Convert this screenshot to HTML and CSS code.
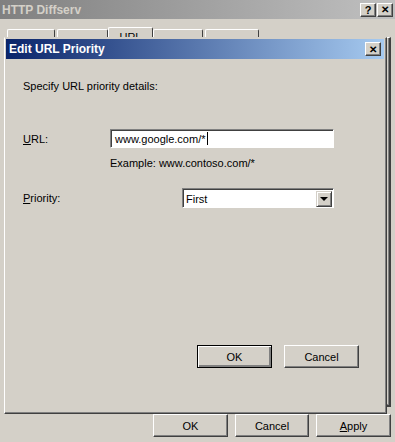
FILE: index.html
```html
<!DOCTYPE html>
<html lang="en">
<head>
    <meta charset="UTF-8">
    <title>HTTP Diffserv</title>
    <link rel="stylesheet" href="styles.css">
</head>
<body>
    <div class="window">
        <div class="titlebar inactive">
            <span class="title">HTTP Diffserv</span>
            <div class="caption-buttons">
                <span class="cap-btn">?</span>
                <span class="cap-btn x">&#x2715;</span>
            </div>
        </div>

        <div class="tabs">
            <span class="tab t1"></span>
            <span class="tab t2"></span>
            <span class="tab t3 selected">URL</span>
            <span class="tab t4"></span>
            <span class="tab t5"></span>
        </div>
        <div class="tab-pane"></div>

        <div class="footer">
            <button class="btn">OK</button>
            <button class="btn">Cancel</button>
            <button class="btn"><u>A</u>pply</button>
        </div>

        <!-- modal dialog sits over the property sheet -->
        <div class="dialog">
            <div class="titlebar active">
                <span class="title">Edit URL Priority</span>
                <span class="cap-btn x">&#x2715;</span>
            </div>
            <div class="dialog-body">
                <div class="intro">Specify URL priority details:</div>

                <div class="row url-row">
                    <label class="label"><u>U</u>RL:</label>
                    <div class="textbox">www.google.com/*<span class="caret"></span></div>
                </div>
                <div class="hint">Example: www.contoso.com/*</div>

                <div class="row prio-row">
                    <label class="label"><u>P</u>riority:</label>
                    <div class="combo">
                        <span class="combo-text">First</span>
                        <span class="combo-btn"><span class="arrow"></span></span>
                    </div>
                </div>

                <div class="dialog-buttons">
                    <button class="btn default">OK</button>
                    <button class="btn">Cancel</button>
                </div>
            </div>
        </div>
    </div>
</body>
</html>
```

FILE: styles.css
```css
body {
    margin: 0;
    background: #d4d0c8;
    font-family: "Liberation Sans", Arial, sans-serif;
    font-size: 11px;
    color: #000;
}
.window {
    position: relative;
    width: 395px;
    height: 442px;
    overflow: hidden;
    display: flex;
    flex-direction: column;
}

/* caption bars */
.titlebar {
    display: flex;
    align-items: center;
    justify-content: space-between;
    height: 19px;
    box-sizing: border-box;
    padding: 0 2px 0 2px;
}
.titlebar .title {
    font-weight: bold;
    font-size: 12px;
}
.titlebar.inactive {
    background: linear-gradient(to right, #808080, #c0c0c0);
    color: #d4d0c8;
    padding-right: 2px;
}
.titlebar.active {
    background: linear-gradient(to right, #0a246a, #a6caf0);
    color: #fff;
    height: 20px;
    padding: 0 3px 0 3px;
}
.caption-buttons {
    display: flex;
}
.cap-btn {
    display: flex;
    align-items: center;
    justify-content: center;
    width: 16px;
    height: 14px;
    box-sizing: border-box;
    background: #d4d0c8;
    color: #000;
    font-weight: bold;
    font-size: 11px;
    border-top: 1px solid #fff;
    border-left: 1px solid #fff;
    border-right: 1px solid #404040;
    border-bottom: 1px solid #404040;
    box-shadow: inset -1px -1px 0 #808080;
}
.cap-btn.x {
    font-size: 10px;
    margin-left: 1px;
}

/* property sheet behind */
.tabs {
    display: flex;
    align-items: flex-end;
    height: 18px;
    padding-left: 7px;
}
.tab {
    height: 8px;
    box-sizing: border-box;
    border-top: 1px solid #fff;
    border-left: 1px solid #fff;
    border-right: 1px solid #404040;
    border-radius: 2px 2px 0 0;
    font-size: 11px;
    text-align: center;
    line-height: 13px;
    padding-top: 3px;
    white-space: nowrap;
}
.t1 { width: 48px; margin-right: 2px; }
.t2 { width: 51px; }
.t3 { width: 45px; }
.t4 { width: 50px; margin-right: 2px; }
.t5 { width: 54px; }
.tab.selected {
    height: 10px;
    color: #000;
}
.tab-pane {
    height: 370px;
    margin: 0 4px 0 4px;
    box-sizing: border-box;
    border-top: 1px solid #fff;
    border-left: 1px solid #fff;
    border-right: 2px solid #404040;
    border-bottom: 2px solid #404040;
    box-shadow: inset -1px -1px 0 #808080;
}
.footer {
    display: flex;
    justify-content: flex-end;
    gap: 7px;
    padding: 7px 4px 0 0;
}

/* push buttons */
.btn {
    width: 75px;
    height: 23px;
    padding: 0;
    background: #d4d0c8;
    font-family: inherit;
    font-size: 11px;
    color: #000;
    border-top: 1px solid #fff;
    border-left: 1px solid #fff;
    border-right: 1px solid #404040;
    border-bottom: 1px solid #404040;
    box-shadow: inset -1px -1px 0 #808080;
}
.footer .btn:nth-child(2) { width: 74px; }
.btn.default {
    border: 1px solid #000;
    box-shadow: inset 1px 1px 0 #fff, inset -2px -2px 0 #808080;
}

/* dialog */
.dialog {
    position: absolute;
    left: 4px;
    top: 37px;
    width: 383px;
    height: 377px;
    box-sizing: border-box;
    background: #d4d0c8;
    border-top: 1px solid #d4d0c8;
    border-left: 1px solid #fff;
    border-right: 1px solid #404040;
    border-bottom: 1px solid #404040;
    box-shadow: inset -1px -1px 0 #808080;
    padding: 1px 2px 2px 1px;
    display: flex;
    flex-direction: column;
    z-index: 1;
}
.dialog-body {
    flex: 1;
    display: flex;
    flex-direction: column;
    padding: 21px 25px 43px 17px;
}
.intro {
    line-height: 13px;
}
.row {
    display: flex;
    align-items: center;
    margin-right: 25px;
}
.label {
    width: 87px;
}
.url-row {
    margin-top: 36px;
}
.textbox {
    flex: 1;
    height: 19px;
    box-sizing: border-box;
    background: #fff;
    border-top: 1px solid #808080;
    border-left: 1px solid #808080;
    border-right: 1px solid #fff;
    border-bottom: 1px solid #fff;
    box-shadow: inset 1px 1px 0 #404040;
    padding: 2px 0 0 4px;
    line-height: 14px;
}
.caret {
    display: inline-block;
    width: 1px;
    height: 13px;
    background: #000;
    margin-left: 1px;
    vertical-align: top;
}
.hint {
    margin: 9px 0 0 87px;
    line-height: 13px;
}
.prio-row {
    margin-top: 18px;
    justify-content: space-between;
}
.combo {
    display: flex;
    align-items: center;
    width: 152px;
    height: 20px;
    box-sizing: border-box;
    background: #fff;
    border-top: 1px solid #808080;
    border-left: 1px solid #808080;
    border-right: 1px solid #fff;
    border-bottom: 1px solid #fff;
    box-shadow: inset 1px 1px 0 #404040;
    padding: 2px 1px 1px 3px;
}
.combo-text {
    flex: 1;
}
.combo-btn {
    display: flex;
    align-items: center;
    justify-content: center;
    width: 16px;
    height: 16px;
    box-sizing: border-box;
    background: #d4d0c8;
    border-top: 1px solid #d4d0c8;
    border-left: 1px solid #d4d0c8;
    border-right: 1px solid #404040;
    border-bottom: 1px solid #404040;
    box-shadow: inset 1px 1px 0 #fff, inset -1px -1px 0 #808080;
}
.arrow {
    width: 0;
    height: 0;
    border-left: 4px solid transparent;
    border-right: 4px solid transparent;
    border-top: 4px solid #000;
}
.dialog-buttons {
    margin-top: auto;
    display: flex;
    justify-content: flex-end;
    gap: 12px;
}
```
